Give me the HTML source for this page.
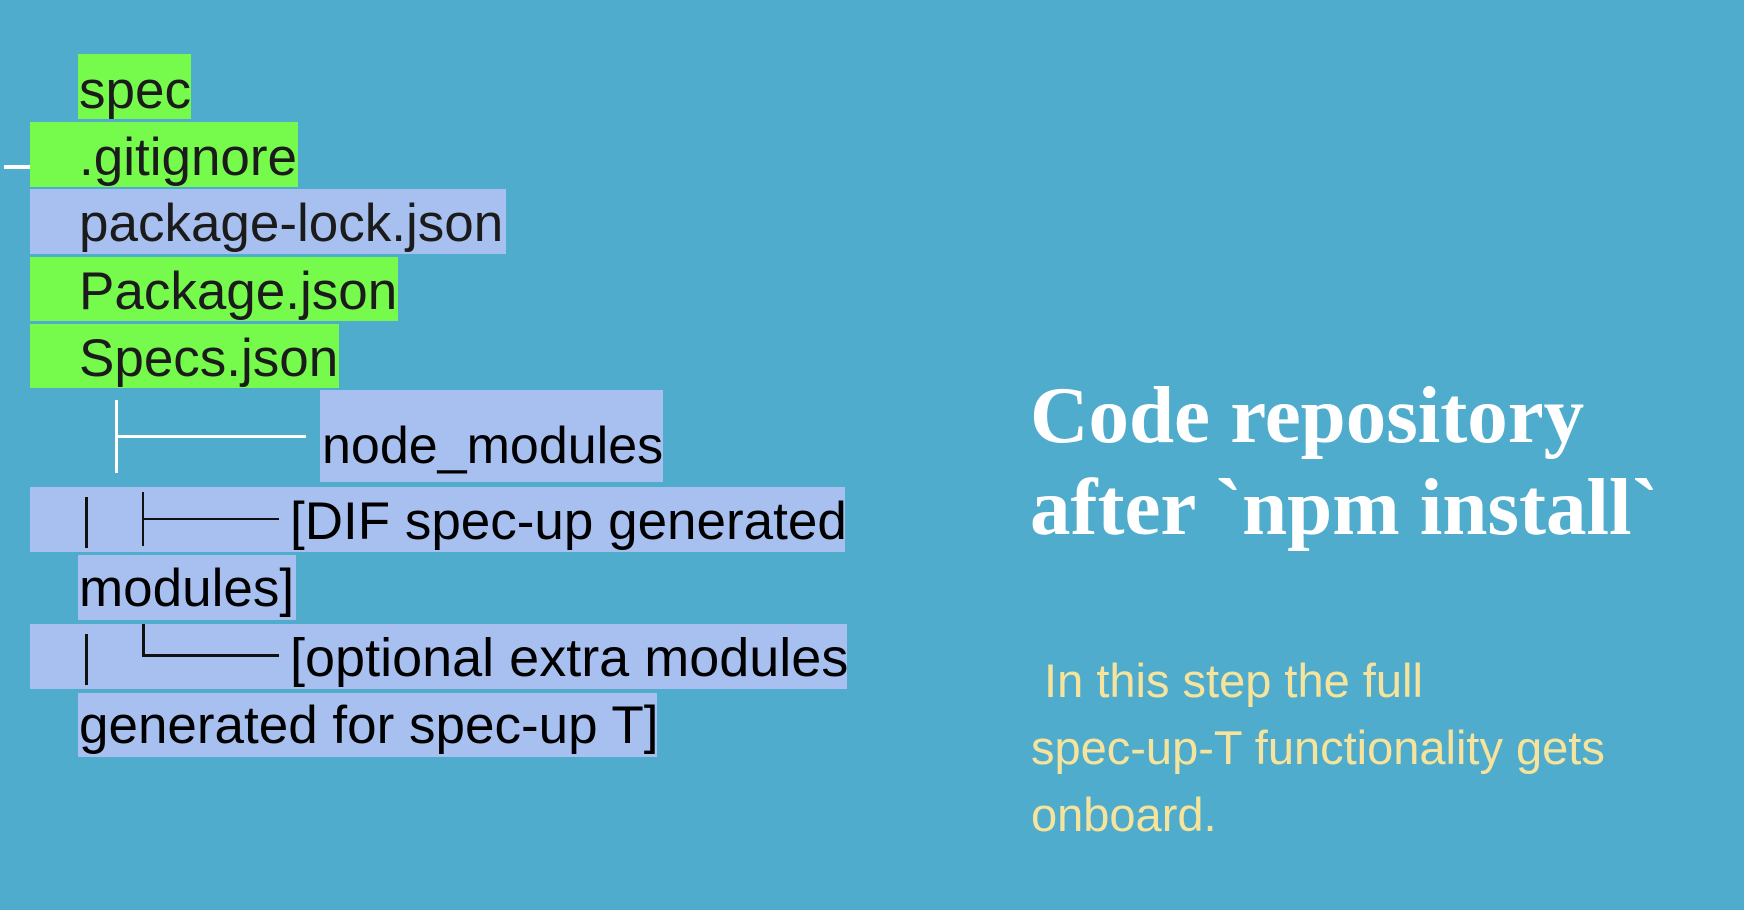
<!DOCTYPE html>
<html><head><meta charset="utf-8"><style>
body{margin:0;width:1744px;height:910px;background:#4faccd;position:relative;overflow:hidden;font-family:"Liberation Sans",sans-serif}
.b{position:absolute}
.g{background:#76fb4d}
.l{background:#a8c0ef}
.t{position:absolute;font-size:53px;line-height:53px;color:#1b1b1b;white-space:nowrap}
.k{position:absolute;background:#111}
.w{position:absolute;background:#fff}
</style></head><body>
<div class="b g" style="left:78px;top:54px;width:113px;height:65px"></div>
<div class="b g" style="left:30px;top:122px;width:268px;height:65px"></div>
<div class="b l" style="left:30px;top:189px;width:476px;height:65px"></div>
<div class="b g" style="left:30px;top:257px;width:368px;height:64px"></div>
<div class="b g" style="left:30px;top:324px;width:309px;height:64px"></div>
<div class="b l" style="left:320px;top:390px;width:343px;height:92px"></div>
<div class="b l" style="left:30px;top:487px;width:815px;height:65px"></div>
<div class="b l" style="left:78px;top:555px;width:218px;height:65px"></div>
<div class="b l" style="left:30px;top:624px;width:817px;height:65px"></div>
<div class="b l" style="left:78px;top:693px;width:579px;height:64px"></div>

<div class="w" style="left:4px;top:165px;width:26px;height:4px"></div>
<div class="w" style="left:115px;top:400px;width:3px;height:73px"></div>
<div class="w" style="left:115px;top:435px;width:191px;height:3px"></div>

<div class="k" style="left:85px;top:497px;width:3px;height:51px"></div>
<div class="k" style="left:142px;top:492px;width:2px;height:54px"></div>
<div class="k" style="left:142px;top:518px;width:137px;height:2px"></div>
<div class="k" style="left:85px;top:634px;width:3px;height:51px"></div>
<div class="k" style="left:142px;top:624px;width:3px;height:33px"></div>
<div class="k" style="left:142px;top:654px;width:137px;height:3px"></div>

<div class="t" style="left:79px;top:64px">spec</div>
<div class="t" style="left:79px;top:131px">.gitignore</div>
<div class="t" style="left:79px;top:197px">package-lock.json</div>
<div class="t" style="left:79px;top:265px">Package.json</div>
<div class="t" style="left:79px;top:332px">Specs.json</div>
<div class="t" style="left:322px;top:420px;color:#000;font-size:52px">node_modules</div>
<div class="t" style="left:290px;top:495px;color:#000">[DIF spec-up generated</div>
<div class="t" style="left:79px;top:562px;color:#000">modules]</div>
<div class="t" style="left:290px;top:632px;color:#000;font-size:54px">[optional extra modules</div>
<div class="t" style="left:79px;top:699px;color:#000">generated for spec-up T]</div>

<div style="position:absolute;left:1030px;top:369px;font-family:'Liberation Serif',serif;font-weight:bold;font-size:81px;line-height:92px;color:#fff;white-space:nowrap">Code repository<br>after `npm install`</div>
<div style="position:absolute;left:1031px;top:647px;font-size:47px;line-height:67px;color:#f6e39c;white-space:nowrap">&nbsp;In this step the full<br>spec-up-T functionality gets<br>onboard.</div>
</body></html>
